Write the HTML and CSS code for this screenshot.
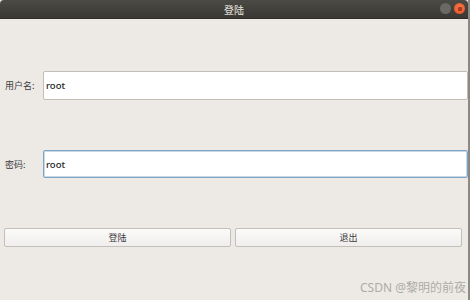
FILE: index.html
```html
<!DOCTYPE html>
<html lang="zh-CN">

<head>
    <title>登陆</title>
    <meta charset="UTF-8">
    <link rel="stylesheet" href="styles.css">
</head>

<body>
    <div class="window">
        <div class="titlebar">
            <span class="title">登陆</span>
            <div class="win-btns">
                <span class="win-btn min"></span>
                <span class="win-btn close"><i></i></span>
            </div>
        </div>
        <div class="content">
            <div class="row user-row">
                <label class="label" for="user">用户名:</label>
                <input type="text" id="user" class="field" value="root" />
            </div>
            <div class="row pass-row">
                <label class="label" for="pass">密码:</label>
                <input type="text" id="pass" class="field focus" value="root" />
            </div>
            <div class="buttons">
                <button class="btn">登陆</button>
                <button class="btn">退出</button>
            </div>
        </div>
        <div class="mark">CSDN @黎明的前夜</div>
    </div>
</body>

</html>
```

FILE: styles.css
```css
html,
body {
    margin: 0;
    padding: 0;
}

body {
    width: 470px;
    height: 300px;
    overflow: hidden;
    background: #edeae6;
    font-family: "Noto Sans", "Noto Sans CJK SC", sans-serif;
    font-size: 10px;
    color: #3c3c3c;
}

.window {
    position: relative;
    height: 300px;
    border-right: 2px solid #8c8983;
    box-sizing: border-box;
}

.titlebar {
    height: 18px;
    background: linear-gradient(#4b4a45, #393834);
    border-radius: 4px 4px 0 0;
    display: flex;
    align-items: center;
    justify-content: center;
    position: relative;
    border-bottom: 1px solid #2d2c29;
}

.title {
    color: #d6d3cc;
    font-family: "Noto Sans CJK SC", sans-serif;
    font-size: 10px;
    font-weight: 500;
}

.win-btns {
    position: absolute;
    right: 3px;
    top: 3px;
    display: flex;
    gap: 3px;
}

.win-btn {
    width: 11px;
    height: 11px;
    border-radius: 50%;
    display: flex;
    align-items: center;
    justify-content: center;
}

.win-btn.min {
    background: #6a6965;
}

.win-btn.close {
    background: radial-gradient(circle at 50% 40%, #f47a50, #e0501d);
}

.win-btn.close i {
    width: 4px;
    height: 4px;
    background: #a8391a;
    border-radius: 1px;
}

.content {
    display: flex;
    flex-direction: column;
    padding-top: 52px;
}

.row {
    display: flex;
    align-items: center;
    padding-left: 5px;
}

.pass-row {
    margin-top: 50px;
}

.label {
    width: 38px;
    font-family: "Noto Sans CJK SC", sans-serif;
    font-size: 9px;
    color: #3c3c3c;
}

.field {
    flex: 1;
    height: 29px;
    box-sizing: border-box;
    margin: 0;
    border: 1px solid #c2bdb7;
    border-radius: 2px;
    background: #fff;
    padding: 0 2px;
    font-family: "Noto Sans", sans-serif;
    font-size: 9.5px;
    font-weight: 500;
    color: #1c1c1c;
    outline: none;
}

.field.focus {
    height: 28px;
    border: 1px solid #7fa4c6;
    box-shadow: inset 0 0 0 1px #c8d8e8;
}

.buttons {
    display: flex;
    gap: 4px;
    margin-top: 50px;
    padding: 0 6px 0 4px;
}

.btn {
    flex: 1;
    height: 19px;
    margin: 0;
    border: 1px solid #c3bfb9;
    border-radius: 2px;
    background: linear-gradient(#fbfbfa, #efeeec);
    font-family: "Noto Sans CJK SC", sans-serif;
    font-size: 9px;
    color: #3c3c3c;
    padding: 0;
}

.mark {
    position: absolute;
    right: 2px;
    bottom: 4px;
    color: #aeaba7;
    font-family: "Noto Sans", "Noto Sans CJK SC", sans-serif;
    font-size: 12px;
}
```
